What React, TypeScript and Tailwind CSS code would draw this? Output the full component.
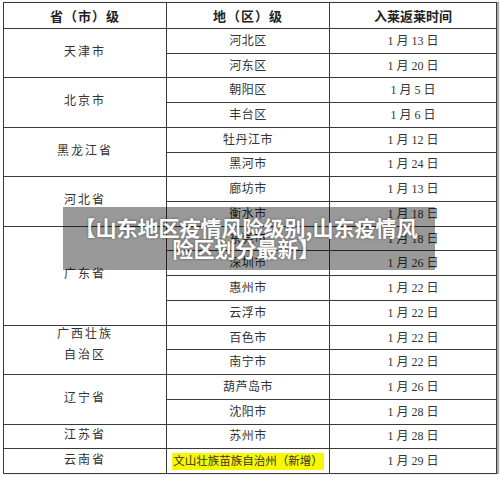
const groups = [
  { name: ['天津市'], rows: [['河北区', '13'], ['河东区', '20']] },
  { name: ['北京市'], rows: [['朝阳区', '5'], ['丰台区', '6']] },
  { name: ['黑龙江省'], rows: [['牡丹江市', '12'], ['黑河市', '24']] },
  { name: ['河北省'], rows: [['廊坊市', '13'], ['衡水市', '18']] },
  {
    name: ['广东省'],
    rows: [
      ['东莞市', '18'],
      ['深圳市', '26'],
      ['惠州市', '22'],
      ['云浮市', '22'],
    ],
  },
  { name: ['广西壮族', '自治区'], rows: [['百色市', '22'], ['南宁市', '22']] },
  { name: ['辽宁省'], rows: [['葫芦岛市', '26'], ['沈阳市', '28']] },
  { name: ['江苏省'], rows: [['苏州市', '28']] },
  { name: ['云南省'], rows: [['文山壮族苗族自治州（新增）', '29']] },
];

const spanClass: Record<number, string> = {
  1: 'row-span-1',
  2: 'row-span-2',
  4: 'row-span-4',
};

const App = () => {
  return (
    <div className="relative w-[500px] h-[478px] bg-white font-['Liberation_Serif','Noto_Sans_CJK_SC',serif] text-[#333]">
      <div className="pt-[2px] pl-[3px]">
        {/* Table drawn as grid, gaps act as the rules */}
        <div className="grid w-[494px] h-[472px] grid-cols-[162px_162px_166px] grid-rows-[25px_repeat(18,minmax(0,1fr))] gap-px p-px bg-[#3a3a3a] shadow-[2px_0_1px_#aaa]">
          <div className="bg-white flex items-center justify-center text-[13px] font-bold tracking-[1px] text-[#222] font-['Noto_Sans_CJK_SC',sans-serif]">
            省（市）级
          </div>
          <div className="bg-white flex items-center justify-center text-[13px] font-bold tracking-[1px] text-[#222] font-['Noto_Sans_CJK_SC',sans-serif]">
            地（区）级
          </div>
          <div className="bg-white flex items-center justify-center text-[13px] font-bold text-[#222] font-['Noto_Sans_CJK_SC',sans-serif]">
            入莱返莱时间
          </div>

          {groups.map((g) => (
            <>
              <div
                key={g.name.join('')}
                className={`${spanClass[g.rows.length]} bg-white flex flex-col items-center justify-center text-[12px] leading-[21px] tracking-[2px] ${g.name.length > 1 ? 'pb-[10px]' : 'pb-[2px]'}`}
              >
                {g.name.map((line) => (
                  <span key={line}>{line}</span>
                ))}
              </div>
              {g.rows.map(([area, day]) => (
                <>
                  <div key={area} className="bg-white flex items-center justify-center text-[12px] tracking-[0.5px] whitespace-nowrap">
                    {area.startsWith('文山') ? (
                      <span className="bg-[#f7f700] px-[1px] leading-[17px] tracking-[0px] text-[11.5px]">{area}</span>
                    ) : (
                      area
                    )}
                  </div>
                  <div key={area + 'd'} className="bg-white flex items-center justify-center text-[12px]">
                    1 月 {day} 日
                  </div>
                </>
              ))}
            </>
          ))}
        </div>
      </div>

      {/* Title overlay */}
      <div className="absolute left-[63px] top-[207px] w-[372px] h-[63px] bg-black/40 flex items-center justify-center">
        <p className="text-center text-white font-bold text-[21px] leading-[21px] whitespace-nowrap pb-[2px] pr-[6px] font-['Noto_Sans_CJK_SC',sans-serif] [text-shadow:0_0_3px_rgba(0,0,0,0.45)]">
          【山东地区疫情风险级别,山东疫情风
          <br />
          险区划分最新】
        </p>
      </div>
    </div>
  );
};

export default App;
